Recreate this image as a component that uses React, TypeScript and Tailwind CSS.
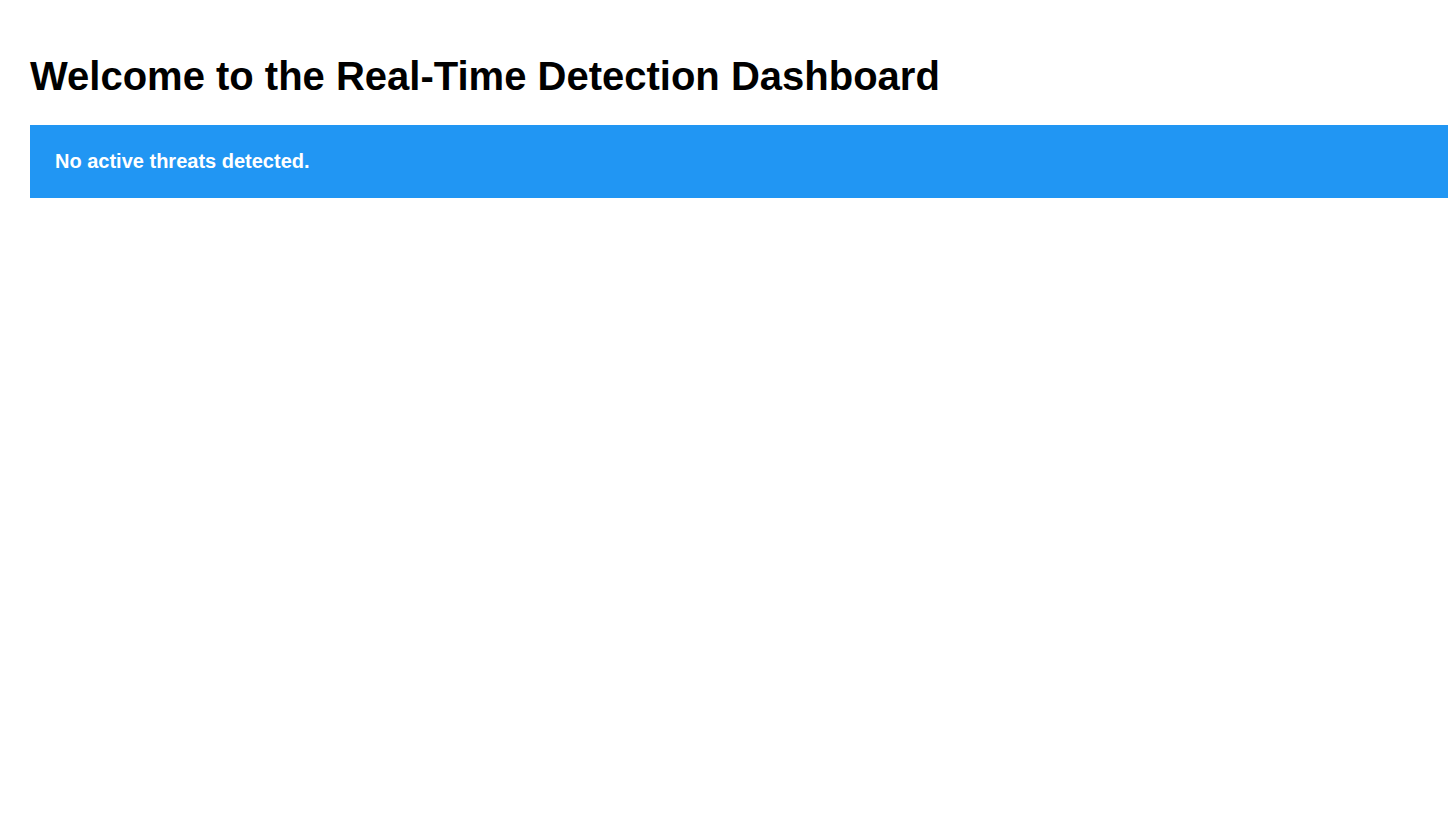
import React from "react";

export default function App() {
  return (
    <div className="min-h-screen bg-white pl-[30px] pt-[53px] font-['Liberation_Sans',Arial,sans-serif]">
      <h1 className="text-[40px] font-bold leading-[46px] text-black">Welcome to the Real-Time Detection Dashboard</h1>
      <div className="mt-[26px] flex h-[73px] items-center bg-[#2196f3] px-[25px] pb-[2px]">
        <p className="text-[20px] font-bold text-white">No active threats detected.</p>
      </div>
    </div>
  );
}
